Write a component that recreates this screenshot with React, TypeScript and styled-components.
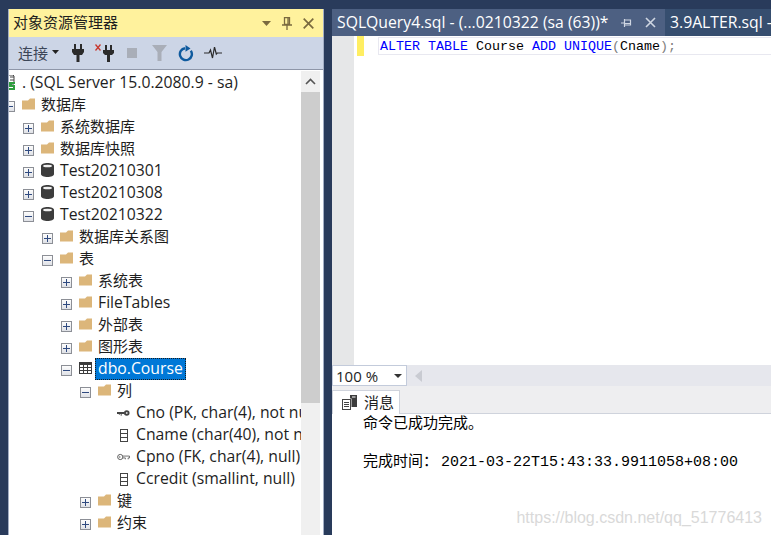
import React from 'react';
import styled, { createGlobalStyle } from 'styled-components';

const GlobalStyle = createGlobalStyle`
    html, body {
        margin: 0;
        padding: 0;
        height: 100%;
        overflow: hidden;
        background: #293b5b;
    }
    * { box-sizing: border-box; }
`;

const UI_FONT = `"Open Sans", "Noto Sans", "Noto Sans CJK SC", sans-serif`;

type RowData = {
    level: number;
    toggle?: 'plus' | 'minus';
    icon: 'server' | 'folder' | 'db' | 'table' | 'pk' | 'fk' | 'column';
    label: string;
    selected?: boolean;
};

const rows: RowData[] = [
    { level: 0, toggle: 'minus', icon: 'server', label: '. (SQL Server 15.0.2080.9 - sa)' },
    { level: 1, toggle: 'minus', icon: 'folder', label: '数据库' },
    { level: 2, toggle: 'plus', icon: 'folder', label: '系统数据库' },
    { level: 2, toggle: 'plus', icon: 'folder', label: '数据库快照' },
    { level: 2, toggle: 'plus', icon: 'db', label: 'Test20210301' },
    { level: 2, toggle: 'plus', icon: 'db', label: 'Test20210308' },
    { level: 2, toggle: 'minus', icon: 'db', label: 'Test20210322' },
    { level: 3, toggle: 'plus', icon: 'folder', label: '数据库关系图' },
    { level: 3, toggle: 'minus', icon: 'folder', label: '表' },
    { level: 4, toggle: 'plus', icon: 'folder', label: '系统表' },
    { level: 4, toggle: 'plus', icon: 'folder', label: 'FileTables' },
    { level: 4, toggle: 'plus', icon: 'folder', label: '外部表' },
    { level: 4, toggle: 'plus', icon: 'folder', label: '图形表' },
    { level: 4, toggle: 'minus', icon: 'table', label: 'dbo.Course', selected: true },
    { level: 5, toggle: 'minus', icon: 'folder', label: '列' },
    { level: 6, icon: 'pk', label: 'Cno (PK, char(4), not null)' },
    { level: 6, icon: 'column', label: 'Cname (char(40), not null)' },
    { level: 6, icon: 'fk', label: 'Cpno (FK, char(4), null)' },
    { level: 6, icon: 'column', label: 'Ccredit (smallint, null)' },
    { level: 5, toggle: 'plus', icon: 'folder', label: '键' },
    { level: 5, toggle: 'plus', icon: 'folder', label: '约束' },
];

const hasCjk = (text: string) => /[\u4e00-\u9fff]/.test(text);

const TreeIcon = ({ kind }: { kind: RowData['icon'] }) => {
    switch (kind) {
        case 'folder':
            return (
                <svg width="13" height="15" viewBox="0 0 13 15">
                    <path d="M0 2.500h6l2-2h5v11H0z" fill="#dcb67a" />
                </svg>
            );
        case 'db':
            return (
                <svg width="13" height="16" viewBox="0 0 13 16">
                    <path d="M0 3c0-2 3-3 6.500-3s6.500 1 6.500 3v8c0 2-3 3-6.500 3S0 13 0 11z" fill="#3c3c3c" />
                    <ellipse cx="6.500" cy="3" rx="4.500" ry="1.300" fill="#f0f0f0" />
                </svg>
            );
        case 'table':
            return (
                <svg width="13" height="14" viewBox="0 0 13 14">
                    <rect width="13" height="12" fill="#3c3c3c" />
                    <path d="M1 3h3v2H1zM5 3h3v2H5zM9 3h3v2H9zM1 6h3v2H1zM5 6h3v2H5zM9 6h3v2H9zM1 9h3v2H1zM5 9h3v2H5zM9 9h3v2H9z" fill="#fff" />
                </svg>
            );
        case 'pk':
            return (
                <svg width="14" height="8" viewBox="0 0 14 8">
                    <circle cx="10.500" cy="4" r="3" fill="#444" />
                    <circle cx="10.500" cy="4" r="1" fill="#ddd" />
                    <path d="M0 3h8v2H5v2H4V5H3v1H2V5H0z" fill="#444" />
                </svg>
            );
        case 'fk':
            return (
                <svg width="14" height="8" viewBox="0 0 14 8">
                    <circle cx="3.500" cy="4" r="2.800" fill="none" stroke="#555" />
                    <circle cx="3" cy="4" r="0.800" fill="#555" />
                    <path d="M6.500 3h7v2h-1.500v1.500M6.500 5h2.500v1.500" fill="none" stroke="#555" strokeWidth="0.900" />
                </svg>
            );
        case 'column':
            return (
                <svg width="8" height="13" viewBox="0 0 8 13">
                    <rect x="0.500" y="0.500" width="7" height="12" fill="#fff" stroke="#444" />
                    <path d="M0 4.500h8M0 8.500h8" stroke="#444" />
                </svg>
            );
        case 'server':
            return (
                <svg width="13" height="16" viewBox="0 0 13 16">
                    <path d="M3 0h7l1 1v8H3z" fill="#fff" stroke="#444" />
                    <path d="M7 2h4M7 5h4" stroke="#444" />
                    <path d="M6 7h6v2H9v1h3v5H6v-2h4v-1H6z" fill="#2f9e3f" />
                </svg>
            );
    }
};

const App = () => {
    return (
        <>
            <GlobalStyle />
            <Page>
                <ExplorerPanel>
                    <TitleBar>
                        <TitleText>对象资源管理器</TitleText>
                        <TitleControls>
                            <svg width="9" height="5" viewBox="0 0 9 5"><path d="M0 0h9L4.500 5z" fill="#7a6a3f" /></svg>
                            <svg width="10" height="13" viewBox="0 0 10 13">
                                <path d="M2.500 0.700h5v6.800h-5zM6 1v6M0 8h10M5 8v5" fill="none" stroke="#7a6a3f" strokeWidth="1.300" />
                            </svg>
                            <svg width="11" height="11" viewBox="0 0 11 11">
                                <path d="M0.700 0.700l9.600 9.600M10.300 0.700L0.700 10.300" stroke="#7a6a3f" strokeWidth="1.700" />
                            </svg>
                        </TitleControls>
                    </TitleBar>

                    <Toolbar>
                        <ConnectButton>
                            连接
                            <svg width="7" height="4" viewBox="0 0 7 4"><path d="M0 0h7L3.500 4z" fill="#222" /></svg>
                        </ConnectButton>
                        <ToolButton>
                            <svg width="12" height="18" viewBox="0 0 12 18">
                                <path d="M2 0h2v5H2zM8 0h2v5H8zM0 5h12v3l-2 3H7.500v7h-3v-7H2L0 8z" fill="#2b2b2b" />
                            </svg>
                        </ToolButton>
                        <ToolButton>
                            <svg width="20" height="18" viewBox="0 0 20 18">
                                <path d="M0.500 0.500l5 6M5.500 0.500l-5 6" stroke="#c8372d" strokeWidth="1.300" />
                                <path d="M10 1h2v5h-2zM15 1h2v5h-2zM8 6h11v3l-2 2h-2v7h-3v-7h-2l-2-2z" fill="#2b2b2b" />
                            </svg>
                        </ToolButton>
                        <ToolButton>
                            <StopIcon />
                        </ToolButton>
                        <ToolButton>
                            <svg width="15" height="16" viewBox="0 0 15 16"><path d="M0 0h15L9.500 7v9h-4V7z" fill="#a9aeb8" /></svg>
                        </ToolButton>
                        <ToolButton>
                            <svg width="17" height="17" viewBox="0 0 17 17">
                                <path d="M7 3.200a6 6 0 1 0 5.800 2.500" fill="none" stroke="#0e5a9e" strokeWidth="2.400" />
                                <path d="M7.500 0l5 3.400-5 3.400z" fill="#0e5a9e" />
                            </svg>
                        </ToolButton>
                        <ToolButton>
                            <svg width="18" height="12" viewBox="0 0 18 12">
                                <path d="M0 6h5l1.500-3 2 8 2-11 1.800 7 1-1H18" fill="none" stroke="#2b2b2b" strokeWidth="1.200" />
                            </svg>
                        </ToolButton>
                    </Toolbar>

                    <TreeBody>
                        <TreeList>
                            {rows.map((row) => (
                                <TreeRow key={row.label + row.level} $level={row.level}>
                                    <Toggle $kind={row.toggle} />
                                    <IconSlot><TreeIcon kind={row.icon} /></IconSlot>
                                    <RowLabel $selected={row.selected} $cjk={hasCjk(row.label)}>{row.label}</RowLabel>
                                </TreeRow>
                            ))}
                        </TreeList>
                        <ScrollBar>
                            <ScrollArrow>
                                <svg width="11" height="7" viewBox="0 0 11 7">
                                    <path d="M1 6l4.500-4.500L10 6" fill="none" stroke="#555" strokeWidth="1.600" />
                                </svg>
                            </ScrollArrow>
                            <ScrollThumb />
                        </ScrollBar>
                    </TreeBody>
                </ExplorerPanel>

                <DocumentArea>
                    <TabStrip>
                        <DocTab $active>
                            <DocTabTitle>SQLQuery4.sql - (...0210322 (sa (63))*</DocTabTitle>
                            <svg width="12" height="10" viewBox="0 0 12 10">
                                <path d="M0 5h3M3.500 1v8M3.500 2h6v5h-6M3.500 5.500h6" fill="none" stroke="#cfd6e2" strokeWidth="1.200" />
                            </svg>
                            <svg width="11" height="11" viewBox="0 0 11 11">
                                <path d="M1 1l9 9M10 1l-9 9" stroke="#cfd6e2" strokeWidth="1.600" />
                            </svg>
                        </DocTab>
                        <DocTab>
                            <DocTabTitle>3.9ALTER.sql - (...)</DocTabTitle>
                        </DocTab>
                    </TabStrip>

                    <Editor>
                        <Gutter />
                        <ChangeMark />
                        <CodeLine>
                            <Kw>ALTER</Kw> <Kw>TABLE</Kw> Course <Kw>ADD</Kw> <Kw>UNIQUE</Kw>
                            <Punct>(</Punct>Cname<Punct>);</Punct>
                        </CodeLine>
                    </Editor>

                    <ZoomBar>
                        <ZoomBox>
                            100 %
                            <svg width="8" height="4" viewBox="0 0 8 4"><path d="M0 0h8L4 4z" fill="#333" /></svg>
                        </ZoomBox>
                        <svg width="7" height="12" viewBox="0 0 7 12"><path d="M7 0v12L0 6z" fill="#c9cbd2" /></svg>
                    </ZoomBar>

                    <ResultTabs>
                        <ResultTab>
                            <svg width="15" height="15" viewBox="0 0 15 15">
                                <rect x="0.500" y="4.500" width="8" height="10" fill="#fff" stroke="#444" />
                                <path d="M2 7.500h5M2 9.500h5M2 11.500h5" stroke="#444" />
                                <path d="M8 0h7v12H9.500V3.500H8z" fill="#3c3c3c" />
                                <path d="M10 2h3.500" stroke="#fff" />
                            </svg>
                            <ResultTabLabel>消息</ResultTabLabel>
                        </ResultTab>
                    </ResultTabs>

                    <Messages>
                        <MessageLine>命令已成功完成。</MessageLine>
                        <MessageLine>&nbsp;</MessageLine>
                        <MessageLine>完成时间：<Mono>2021-03-22T15:43:33.9911058+08:00</Mono></MessageLine>
                    </Messages>
                </DocumentArea>

                <Watermark>https://blog.csdn.net/qq_51776413</Watermark>
            </Page>
        </>
    );
};

export default App;

const Page = styled.div`
    position: relative;
    display: grid;
    grid-template-columns: 316px 1fr;
    column-gap: 8px;
    height: 535px;
    padding: 9px 0 0 8px;
    overflow: hidden;
    font-family: ${UI_FONT};
    color: #1e1e1e;
`;

const ExplorerPanel = styled.section`
    display: flex;
    flex-direction: column;
    height: 560px;
    background: #fff;
    border-left: 1px solid #a3aec4;
    border-right: 1px solid #a3aec4;
`;

const TitleBar = styled.header`
    display: flex;
    align-items: center;
    justify-content: space-between;
    height: 28px;
    padding: 0 9px 0 4px;
    background: #fff29d;
`;

const TitleText = styled.span`
    padding-bottom: 3px;
    font-size: 15px;
`;

const TitleControls = styled.div`
    display: flex;
    align-items: center;
    gap: 11px;
`;

const Toolbar = styled.div`
    display: flex;
    align-items: center;
    gap: 3px;
    height: 33px;
    padding-left: 9px;
    background: #ccd5e6;
    border-bottom: 1px solid #8e96a8;
`;

const ConnectButton = styled.div`
    display: flex;
    align-items: center;
    gap: 4px;
    width: 45px;
    padding-bottom: 2px;
    font-size: 15px;
    color: #3c4658;
`;

const ToolButton = styled.div`
    display: flex;
    align-items: center;
    justify-content: center;
    width: 24px;
    height: 24px;
`;

const StopIcon = styled.span`
    width: 10px;
    height: 10px;
    background: #a9aeb8;
`;

const TreeBody = styled.div`
    flex: 1;
    display: flex;
    padding-right: 3px;
    min-height: 0;
`;

const TreeList = styled.div`
    flex: 1;
    min-width: 0;
    padding-top: 2px;
    overflow: hidden;
`;

const TreeRow = styled.div<{ $level: number }>`
    display: flex;
    align-items: center;
    height: 22px;
    margin-left: ${(p) => p.$level * 19 - 24}px;
    white-space: nowrap;
`;

const Toggle = styled.span<{ $kind?: 'plus' | 'minus' }>`
    position: relative;
    flex: none;
    width: 11px;
    height: 11px;
    margin-top: 2px;
    visibility: ${(p) => (p.$kind ? 'visible' : 'hidden')};
    background: linear-gradient(#fdfdfd, #dfe1e6);
    border: 1px solid #8c8f96;

    &::before {
        content: '';
        position: absolute;
        left: 1px;
        right: 1px;
        top: 4px;
        height: 1px;
        background: #2f4a80;
    }

    &::after {
        content: '';
        position: absolute;
        display: ${(p) => (p.$kind === 'plus' ? 'block' : 'none')};
        top: 1px;
        bottom: 1px;
        left: 4px;
        width: 1px;
        background: #2f4a80;
    }
`;

const IconSlot = styled.span`
    flex: none;
    display: flex;
    align-items: center;
    justify-content: center;
    width: 13px;
    margin-left: 7px;
`;

const RowLabel = styled.span<{ $selected?: boolean; $cjk?: boolean }>`
    height: 22px;
    margin-left: 3px;
    padding: 0 2px;
    font-size: ${(p) => (p.$cjk ? '15px' : '15.75px')};
    line-height: 18px;
    border: 1px dotted ${(p) => (p.$selected ? '#1a1a1a' : 'transparent')};
    background: ${(p) => (p.$selected ? '#0078d7' : 'transparent')};
    color: ${(p) => (p.$selected ? '#fff' : '#1e1e1e')};
`;

const ScrollBar = styled.div`
    flex: none;
    display: flex;
    flex-direction: column;
    width: 19px;
    margin-top: 1px;
    background: #f0f0f0;
`;

const ScrollArrow = styled.div`
    display: flex;
    align-items: center;
    justify-content: center;
    height: 21px;
`;

const ScrollThumb = styled.div`
    height: 311px;
    background: #cdcdcd;
`;

const DocumentArea = styled.section`
    display: flex;
    flex-direction: column;
    min-width: 0;
    background: #fff;
`;

const TabStrip = styled.div`
    display: flex;
    flex: none;
    height: 27px;
    overflow: hidden;
`;

const DocTab = styled.div<{ $active?: boolean }>`
    flex: none;
    display: flex;
    align-items: center;
    gap: 12px;
    width: ${(p) => (p.$active ? '333px' : 'auto')};
    padding: 0 8px 0 5px;
    background: ${(p) => (p.$active ? '#4d6082' : '#364e6f')};
    color: #fff;
`;

const DocTabTitle = styled.span`
    flex: none;
    padding-bottom: 2px;
    font-size: 15.75px;
    white-space: nowrap;
`;

const Editor = styled.div`
    position: relative;
    flex: none;
    display: flex;
    align-items: flex-start;
    height: 329px;
`;

const Gutter = styled.div`
    flex: none;
    width: 22px;
    height: 100%;
    background: #e6e7e8;
`;

const ChangeMark = styled.div`
    flex: none;
    width: 7px;
    height: 20px;
    margin: 0 14px 0 3px;
    background: #ffee62;
`;

const CodeLine = styled.pre`
    flex: 1;
    height: 18px;
    margin: 1px 0 0;
    padding-left: 1px;
    border: 1px solid #e8e8f0;
    border-right: none;
    font-family: "Liberation Mono", monospace;
    font-size: 13.33px;
    line-height: 18px;
    color: #000;
`;

const Kw = styled.span`
    color: #0000ff;
`;

const Punct = styled.span`
    color: #808080;
`;

const ZoomBar = styled.div`
    flex: none;
    display: flex;
    align-items: center;
    gap: 8px;
    height: 21px;
    background: #e6e7ed;
`;

const ZoomBox = styled.div`
    display: flex;
    align-items: center;
    justify-content: space-between;
    width: 75px;
    height: 21px;
    padding: 0 4px 0 3px;
    background: #fff;
    border: 1px solid #c3cbdb;
    font-size: 15px;
`;

const ResultTabs = styled.div`
    flex: none;
    display: flex;
    align-items: flex-end;
    height: 28px;
    background: #eeeef0;
    border-bottom: 1px solid #cfd3dc;
`;

const ResultTab = styled.div`
    display: flex;
    align-items: center;
    gap: 7px;
    width: 68px;
    height: 24px;
    margin-bottom: -1px;
    padding-left: 9px;
    background: #fff;
    border: 1px solid #cfd3dc;
    border-bottom: none;
    font-size: 15px;
`;

const ResultTabLabel = styled.span`
    padding-bottom: 3px;
`;

const Messages = styled.div`
    padding-left: 31px;
    font-size: 15px;
    color: #000;
`;

const MessageLine = styled.div`
    height: 19px;
    line-height: 17px;
    white-space: nowrap;
`;

const Mono = styled.span`
    margin-left: 3px;
    font-family: "Liberation Mono", monospace;
`;

const Watermark = styled.div`
    position: absolute;
    right: 9px;
    bottom: 8px;
    font-family: "Liberation Sans", sans-serif;
    font-size: 16px;
    color: #d9d9d9;
`;
